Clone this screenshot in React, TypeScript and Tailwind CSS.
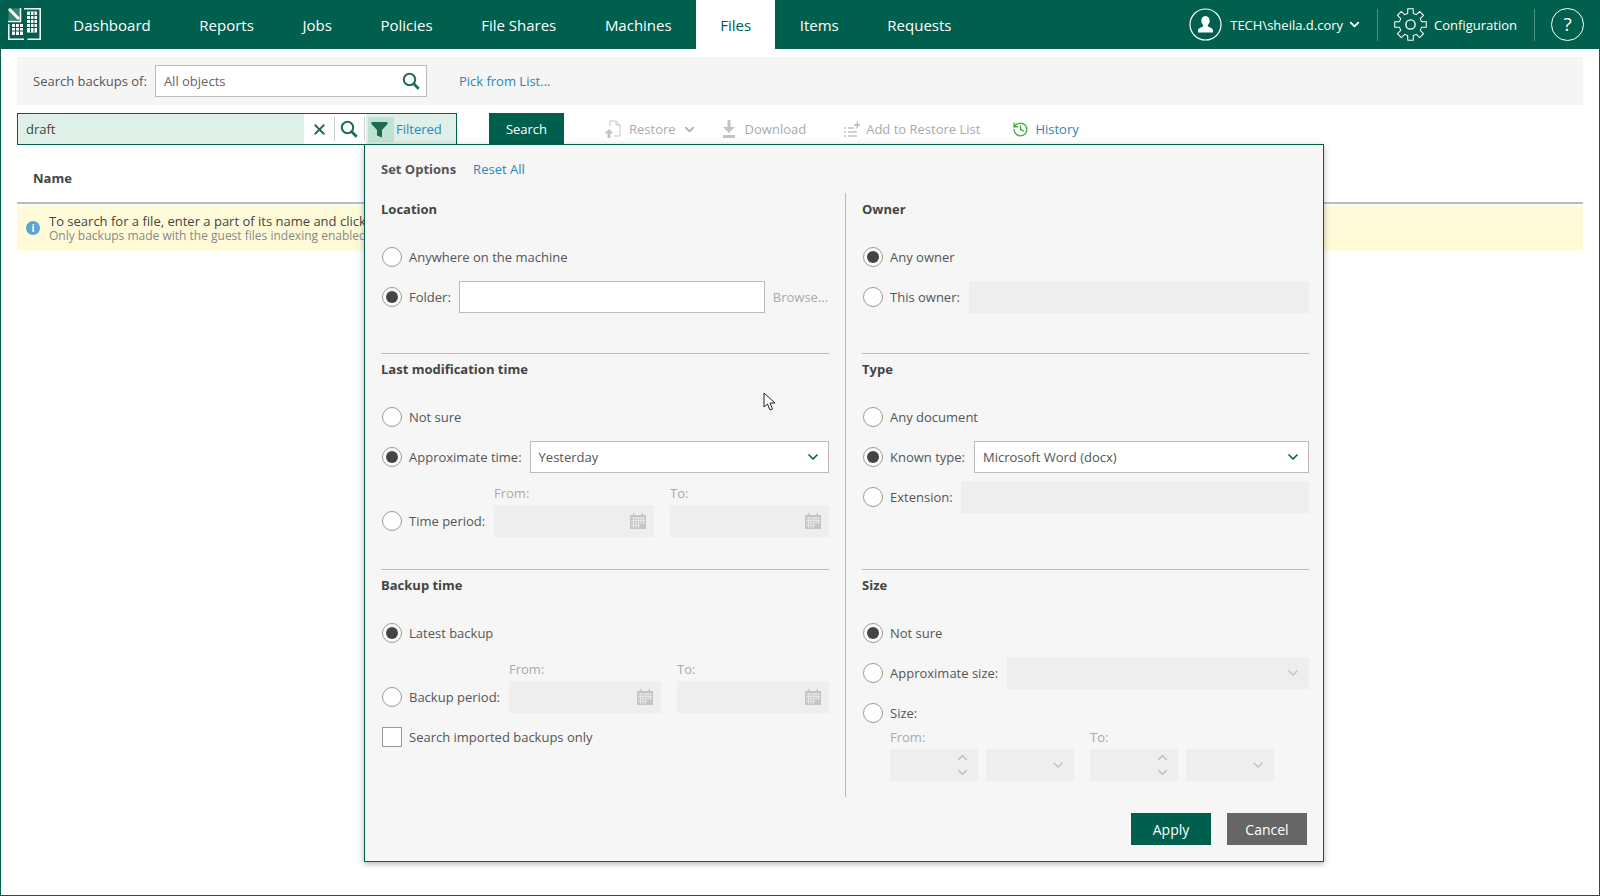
import React from 'react';
import { ChevronDown, ChevronUp, History, X } from 'lucide-react';

const navItems = ['Dashboard', 'Reports', 'Jobs', 'Policies', 'File Shares', 'Machines', 'Files', 'Items', 'Requests'];

// outline of an 8 tooth cog, centred on 16,16
const gearPath = () => {
  const pts: string[] = [];
  for (let i = 0; i < 8; i++) {
    const a = (i * Math.PI) / 4;
    const p = (r: number, d: number) => {
      const t = a + d;
      return `${(16 + r * Math.sin(t)).toFixed(2)} ${(16 - r * Math.cos(t)).toFixed(2)}`;
    };
    pts.push(p(11, -0.25), p(15.5, -0.17), p(15.5, 0.17), p(11, 0.25));
  }
  return 'M' + pts.join('L') + 'Z';
};

const Logo = () => (
  <svg width="33" height="33" viewBox="0 0 33 33" fill="none" stroke="white" strokeWidth="1.500" className="shrink-0">
    <path d="M0.500 0.500h12v12H0.500z" fill="#3a8573" stroke="none" />
    <path d="M1 1l10 10" strokeWidth="3" />
    <path d="M12.500 0v13.500H0" strokeWidth="1.500" />
    <path d="M16 0.800h16.200v30.400H19.500M16 31.200H0.800V16" />
    <path d="M19 3.500h10v21H19z" fill="white" stroke="none" />
    <path d="M19 7.500h10M19 11.500h10M19 15.500h10M19 19.500h10M22.500 4v20M26 4v20" stroke="#00604d" strokeWidth="1" />
    <path d="M4 16h11v11H4z" fill="white" stroke="none" />
    <path d="M4 19.500h11M4 23h11M7.500 16v11M11.500 16v11" stroke="#00604d" strokeWidth="1" />
  </svg>
);

const Magnifier = () => (
  <svg width="18" height="18" viewBox="0 0 18 18" fill="none" stroke="#1f6a55" className="shrink-0">
    <circle cx="7.500" cy="7.500" r="5.700" strokeWidth="2" />
    <path d="M11.500 11.500l5.200 5.200" strokeWidth="2.800" />
  </svg>
);

const CalendarIcon = () => (
  <svg width="16" height="16" viewBox="0 0 16 16" className="shrink-0">
    <path d="M0 2h16v14H0z" fill="#c4c4c4" />
    <path d="M3 0h1.500v3H3zM11.500 0H13v3h-1.500z" fill="#c4c4c4" />
    <path d="M1 5h14M1 7.500h14M1 10h14M1 12.500h9M3.500 4v11M6 4v11M8.500 4v11M11 4v6M13.500 4v6" stroke="#eeeeee" strokeWidth="0.8" />
  </svg>
);

const Radio = ({ on = false }: { on?: boolean }) => (
  <span className="ml-px flex h-5 w-5 shrink-0 items-center justify-center rounded-full border border-[#999999] bg-white">
    {on && <span className="h-3 w-3 rounded-full bg-[#444444]" />}
  </span>
);

const RadioRow = ({ label, on, className = '', children }: { label: string; on?: boolean; className?: string; children?: React.ReactNode }) => (
  <div className={`flex h-8 items-center ${className}`}>
    <Radio on={on} />
    <span className="ml-[7px] whitespace-nowrap pt-[2px]">{label}</span>
    {children}
  </div>
);

const Disabled = ({ className = '', children }: { className?: string; children?: React.ReactNode }) => (
  <div className={`flex h-8 items-center justify-end bg-[#eeeeee] pr-2 ${className}`}>{children}</div>
);

const DateField = ({ label, className }: { label: string; className: string }) => (
  <div className={`flex flex-col ${className}`}>
    <span className="mb-1 h-4 leading-4 text-[#aaaaaa]">{label}</span>
    <Disabled>
      <CalendarIcon />
    </Disabled>
  </div>
);

const SelectBox = ({ value, className }: { value: string; className: string }) => (
  <div className={`flex h-8 items-center justify-between border border-[#bbbbbb] bg-white pl-2 pr-[7px] ${className}`}>
    <span className="pt-[2px]">{value}</span>
    <ChevronDown size={16} strokeWidth={2.5} className="text-[#00604d]" />
  </div>
);

const Heading = ({ children }: { children: React.ReactNode }) => (
  <div className="h-4 font-bold leading-4 text-[#444444]">{children}</div>
);

const SizeField = ({ label, className = '' }: { label: string; className?: string }) => (
  <div className={`flex flex-col ${className}`}>
    <span className="mb-1 h-4 leading-4 text-[#aaaaaa]">{label}</span>
    <div className="flex gap-2">
      <div className="flex h-8 w-[88px] items-center justify-end bg-[#eeeeee] pr-2">
        <div className="flex flex-col text-[#c4c4c4]">
          <ChevronUp size={15} strokeWidth={2.5} />
          <ChevronDown size={15} strokeWidth={2.5} />
        </div>
      </div>
      <div className="flex h-8 w-[88px] items-center justify-end bg-[#eeeeee] pr-2">
        <ChevronDown size={16} strokeWidth={2.5} className="text-[#c4c4c4]" />
      </div>
    </div>
  </div>
);

const FilterPopup = () => (
  <div className="absolute left-[363px] top-[144px] z-10 h-[718px] w-[960px] border border-[#00604d] bg-[#f6f6f6] pl-4 pr-[14px] shadow-[0_2px_6px_rgba(0,0,0,0.3)]">
    <div className="flex h-12 items-center pt-[1px]">
      <span className="font-bold">Set Options</span>
      <span className="ml-[17px] text-[#2a87b8]">Reset All</span>
    </div>

    <div className="flex">
      {/* left column */}
      <div className="h-[604px] w-[448px] pt-2">
        <div className="h-[153px] border-b border-[#bbbbbb]">
          <Heading>Location</Heading>
          <RadioRow label="Anywhere on the machine" className="mt-6" />
          <RadioRow label="Folder:" on className="mt-2">
            <div className="ml-2 h-8 w-[306px] border border-[#bbbbbb] bg-white" />
            <span className="ml-2 pt-[2px] text-[#aaaaaa]">Browse...</span>
          </RadioRow>
        </div>
        <div className="h-[216px] border-b border-[#bbbbbb] pt-[7px]">
          <Heading>Last modification time</Heading>
          <RadioRow label="Not sure" className="mt-6" />
          <RadioRow label="Approximate time:" on className="mt-2">
            <SelectBox value="Yesterday" className="ml-2 flex-1" />
          </RadioRow>
          <div className="mt-3 flex items-end">
            <RadioRow label="Time period:" className="w-[113px]" />
            <DateField label="From:" className="w-[160px]" />
            <DateField label="To:" className="ml-4 w-[159px]" />
          </div>
        </div>
        <div className="pt-[7px]">
          <Heading>Backup time</Heading>
          <RadioRow label="Latest backup" on className="mt-6" />
          <div className="mt-3 flex items-end">
            <RadioRow label="Backup period:" className="w-[128px]" />
            <DateField label="From:" className="w-[152px]" />
            <DateField label="To:" className="ml-4 w-[152px]" />
          </div>
          <div className="mt-2 flex h-8 items-center">
            <span className="ml-px h-5 w-5 border border-[#999999] bg-white" />
            <span className="ml-[7px] pt-[2px]">Search imported backups only</span>
          </div>
        </div>
      </div>

      <div className="mx-4 h-[604px] w-px bg-[#bbbbbb]" />

      {/* right column */}
      <div className="h-[604px] w-[447px] pt-2">
        <div className="h-[153px] border-b border-[#bbbbbb]">
          <Heading>Owner</Heading>
          <RadioRow label="Any owner" on className="mt-6" />
          <RadioRow label="This owner:" className="mt-2">
            <Disabled className="ml-[9px] flex-1" />
          </RadioRow>
        </div>
        <div className="h-[216px] border-b border-[#bbbbbb] pt-[7px]">
          <Heading>Type</Heading>
          <RadioRow label="Any document" className="mt-6" />
          <RadioRow label="Known type:" on className="mt-2">
            <SelectBox value="Microsoft Word (docx)" className="ml-[9px] flex-1" />
          </RadioRow>
          <RadioRow label="Extension:" className="mt-2">
            <Disabled className="ml-2 flex-1" />
          </RadioRow>
        </div>
        <div className="pt-[7px]">
          <Heading>Size</Heading>
          <RadioRow label="Not sure" on className="mt-6" />
          <RadioRow label="Approximate size:" className="mt-2">
            <Disabled className="ml-[9px] flex-1">
              <ChevronDown size={16} strokeWidth={2.5} className="text-[#c4c4c4]" />
            </Disabled>
          </RadioRow>
          <RadioRow label="Size:" className="mt-2" />
          <div className="ml-[28px] flex">
            <SizeField label="From:" />
            <SizeField label="To:" className="ml-4" />
          </div>
        </div>
      </div>
    </div>

    <div className="mr-[2px] mt-4 flex justify-end gap-4">
      <button className="h-8 w-20 bg-[#00604d] text-[14px] text-white">Apply</button>
      <button className="h-8 w-20 bg-[#666666] text-[14px] text-white">Cancel</button>
    </div>
  </div>
);

export default function App() {
  return (
    <div className="relative flex h-[896px] w-[1600px] flex-col overflow-hidden border-x border-b border-[#00604d] bg-white font-['Open_Sans',sans-serif] text-[13px] text-[#555555]">
      {/* top nav */}
      <header className="-mx-px flex h-[49px] shrink-0 items-center bg-[#00604d] text-white">
        <div className="ml-[8px] mr-[8px]">
          <Logo />
        </div>
        <nav className="flex h-full text-[15px]">
          {navItems.map((item) => (
            <div
              key={item}
              className={`flex h-full items-center px-[24.3px] pt-[2px] ${item === 'Files' ? 'bg-white text-[#00604d]' : ''}`}
            >
              {item}
            </div>
          ))}
        </nav>
        <div className="ml-auto flex h-full items-center pr-[16px] text-[13px]">
          <svg width="33" height="33" viewBox="0 0 33 33" fill="none">
            <circle cx="16.500" cy="16.500" r="15.500" stroke="white" strokeWidth="1.200" />
            <path d="M16.500 8c2.800 0 4.200 2.200 4.200 4.700 0 1.900-0.900 3.400-1.800 4.200v1.500c1.900 1 5.100 1.400 5.100 4.300v1.800H9v-1.800c0-2.900 3.200-3.300 5.100-4.300v-1.500c-0.900-0.800-1.800-2.300-1.800-4.200 0-2.500 1.400-4.700 4.200-4.700z" fill="white" />
          </svg>
          <span className="ml-2 pt-[2px]">TECH\sheila.d.cory</span>
          <ChevronDown size={15} strokeWidth={3} className="ml-1" />
          <div className="ml-[15px] h-8 w-px bg-white/30" />
          <svg width="33" height="33" viewBox="0 0 32 32" fill="none" stroke="white" strokeWidth="1" className="ml-4">
            <path d={gearPath()} />
            <circle cx="16" cy="16" r="4.500" strokeWidth="1.300" />
          </svg>
          <span className="ml-[7px] pt-[2px]">Configuration</span>
          <div className="ml-[17px] h-8 w-px bg-white/30" />
          <div className="ml-4 flex h-[33px] w-[33px] items-center justify-center rounded-full border border-white text-[19px]">?</div>
        </div>
      </header>

      {/* object picker */}
      <div className="mx-[16px] mt-2 flex h-12 shrink-0 items-center bg-[#f5f5f5] pl-[16px]">
        <span className="pt-[2px]">Search backups of:</span>
        <div className="ml-2 flex h-8 w-[272px] items-center justify-between border border-[#bbbbbb] bg-white pl-2 pr-[6px]">
          <span className="pt-[2px] text-[#666666]">All objects</span>
          <Magnifier />
        </div>
        <span className="ml-8 pt-[2px] text-[#2a87b8]">Pick from List...</span>
      </div>

      {/* search + toolbar */}
      <div className="ml-[16px] mt-2 flex h-8 shrink-0 items-center">
        <div className="flex h-full w-[440px] items-center border border-[#00604d] bg-[#dff0e8]">
          <div className="flex h-full w-[286px] items-center pl-2 pt-[2px] text-[#444444]">draft</div>
          <div className="flex h-full w-[30px] items-center justify-center bg-white">
            <X size={17} strokeWidth={2.6} className="text-[#1f6a55]" />
          </div>
          <div className="flex h-full w-[32px] items-center bg-white">
            <span className="h-6 w-px bg-[#cccccc]" />
            <span className="ml-[5px]">
              <Magnifier />
            </span>
            <span className="ml-[6px] h-6 w-px bg-[#cccccc]" />
          </div>
          <div className="ml-[2px] flex h-[25px] w-[26px] items-center justify-start bg-[#bfe3d3] pl-[3px]">
            <svg width="17" height="17" viewBox="0 0 17 17">
              <path d="M0.500 1h16v2l-5.500 6v7.500l-5-2V9L0.500 3z" fill="#1f6a55" />
            </svg>
          </div>
          <span className="ml-[2px] pt-[2px] text-[#2a87b8]">Filtered</span>
        </div>
        <button className="ml-8 h-full w-[75px] bg-[#00604d] pt-[2px] text-white">Search</button>

        <div className="ml-10 flex items-center text-[#aaaaaa]">
          <svg width="17" height="18" viewBox="0 0 17 18" fill="none">
            <path d="M6 6V1h6l4 4v11h-6M12 1v4h4" stroke="#c4c4c4" />
            <path d="M5 9l-4.500 4.500h3V18h3v-4.500h3z" fill="#c4c4c4" />
          </svg>
          <span className="ml-2 pt-[2px]">Restore</span>
          <ChevronDown size={15} strokeWidth={2.5} className="ml-[6px] text-[#aaaaaa]" />
          <svg width="14" height="18" viewBox="0 0 14 18" className="ml-[25px]">
            <path d="M5.500 0h3v7H13l-6 6-6-6h4.500zM1 15h12v3H1z" fill="#c4c4c4" />
          </svg>
          <span className="ml-[9px] pt-[2px]">Download</span>
          <svg width="16" height="16" viewBox="0 0 16 16" fill="none" className="ml-[38px]">
            <path d="M0 7h2M0 11h2M0 15h2M4 7h6M4 11h9M4 15h9" stroke="#c4c4c4" strokeWidth="1.500" />
            <path d="M10 3h2.500V0.500h1.500V3h2v2h-2v2.500h-1.500V5H10z" fill="#c4c4c4" />
          </svg>
          <span className="ml-[6px] pt-[2px]">Add to Restore List</span>
          <History size={17} strokeWidth={2} className="ml-8 text-[#3fae49]" />
          <span className="ml-[6px] pt-[2px] text-[#2a87b8]">History</span>
        </div>
      </div>

      {/* grid header + hint */}
      <div className="mx-[16px] flex h-[59px] shrink-0 items-center border-b-2 border-[#bbbbbb] pl-[16px] pt-[10px] font-bold text-[#444444]">
        Name
      </div>
      <div className="mx-[16px] mt-[1px] flex h-[46px] shrink-0 items-center bg-[#fffbd9] pl-[9px]">
        <span className="flex h-[14px] w-[14px] items-center justify-center rounded-full bg-[#5ba6d0] text-[10px] font-bold text-white">i</span>
        <div className="ml-[9px] flex w-[315px] flex-col overflow-hidden whitespace-nowrap">
          <span className="leading-[15px] text-[#444444]">To search for a file, enter a part of its name and click Search.</span>
          <span className="text-[12px] leading-[14px] text-[#888888]">Only backups made with the guest files indexing enabled are searched.</span>
        </div>
      </div>

      <FilterPopup />

      {/* mouse pointer */}
      <svg width="14" height="20" viewBox="0 0 14 20" className="absolute left-[762px] top-[392px] z-20">
        <path d="M1 1v14l3.500-3 2.500 6 2.500-1-2.500-6h5z" fill="white" stroke="#222222" strokeWidth="1" />
      </svg>
    </div>
  );
}
